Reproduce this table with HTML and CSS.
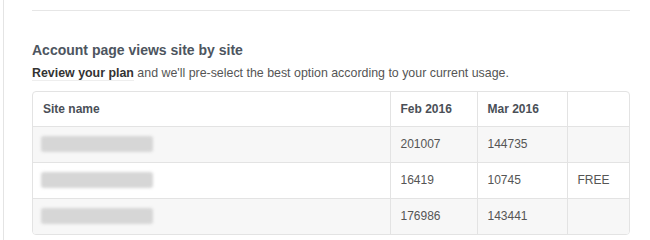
FILE: index.html
```html
<!DOCTYPE html>
<html lang="en">

<head>
    <meta charset="UTF-8">
    <meta name="viewport" content="width=device-width, initial-scale=1.0">
    <title>Account usage</title>
    <link rel="stylesheet" href="styles.css">
</head>

<body>
    <div class="panel">
        <hr class="divider">

        <div class="usage">
            <h3>Account page views site by site</h3>
            <p class="hint"><a href="#">Review your plan</a> and we'll pre-select the best option according to your current usage.</p>

            <div class="tableWrap">
                <table>
                    <thead>
                        <tr>
                            <th class="colSite">Site name</th>
                            <th class="colFeb">Feb 2016</th>
                            <th class="colMar">Mar 2016</th>
                            <th class="colPlan"></th>
                        </tr>
                    </thead>
                    <tbody>
                        <tr>
                            <td><span class="masked"></span></td>
                            <td>201007</td>
                            <td>144735</td>
                            <td></td>
                        </tr>
                        <tr>
                            <td><span class="masked"></span></td>
                            <td>16419</td>
                            <td>10745</td>
                            <td>FREE</td>
                        </tr>
                        <tr>
                            <td><span class="masked"></span></td>
                            <td>176986</td>
                            <td>143441</td>
                            <td></td>
                        </tr>
                    </tbody>
                </table>
            </div>
        </div>
    </div>
</body>

</html>
```

FILE: styles.css
```css
* {
    margin: 0;
    box-sizing: border-box;
}

body {
    font-family: "Liberation Sans", Arial, sans-serif;
    color: #555;
    background: #fff;
}

.panel {
    margin-left: 3px;
    border-left: 1px solid #e4e4e4;
    padding: 10px 20px 0 28px;
    min-height: 240px;
}

.divider {
    border: 0;
    border-top: 1px solid #e6e6e6;
    height: 0;
}

.usage {
    padding-top: 31px;
}

h3 {
    font-size: 14px;
    font-weight: bold;
    color: #4d5560;
    line-height: 16px;
}

.hint {
    margin-top: 8px;
    font-size: 12.4px;
    line-height: 15px;
    color: #555;
}

.hint a {
    color: #333;
    font-weight: bold;
    text-decoration: none;
    border-bottom: 1px solid #eee;
}

.tableWrap {
    margin-top: 10px;
    border: 1px solid #e3e3e3;
    border-radius: 4px;
    overflow: hidden;
}

table {
    width: 100%;
    border-collapse: collapse;
    table-layout: fixed;
    font-size: 12px;
}

th, td {
    height: 36px;
    padding: 0 10px;
    text-align: left;
    border-left: 1px solid #e3e3e3;
    border-top: 1px solid #e3e3e3;
}

th:first-child, td:first-child {
    border-left: 0;
}

thead th {
    border-top: 0;
    height: 34px;
    color: #4a4f57;
    font-weight: bold;
}

tbody tr:nth-child(odd) {
    background: #f7f7f7;
}

.colSite { width: 357px; }
.colFeb { width: 87px; }
.colMar { width: 90px; }

.masked {
    display: block;
    width: 112px;
    height: 16px;
    margin-left: -2px;
    border-radius: 3px;
    background: #d6d6d6;
    filter: blur(1.5px);
}
```
